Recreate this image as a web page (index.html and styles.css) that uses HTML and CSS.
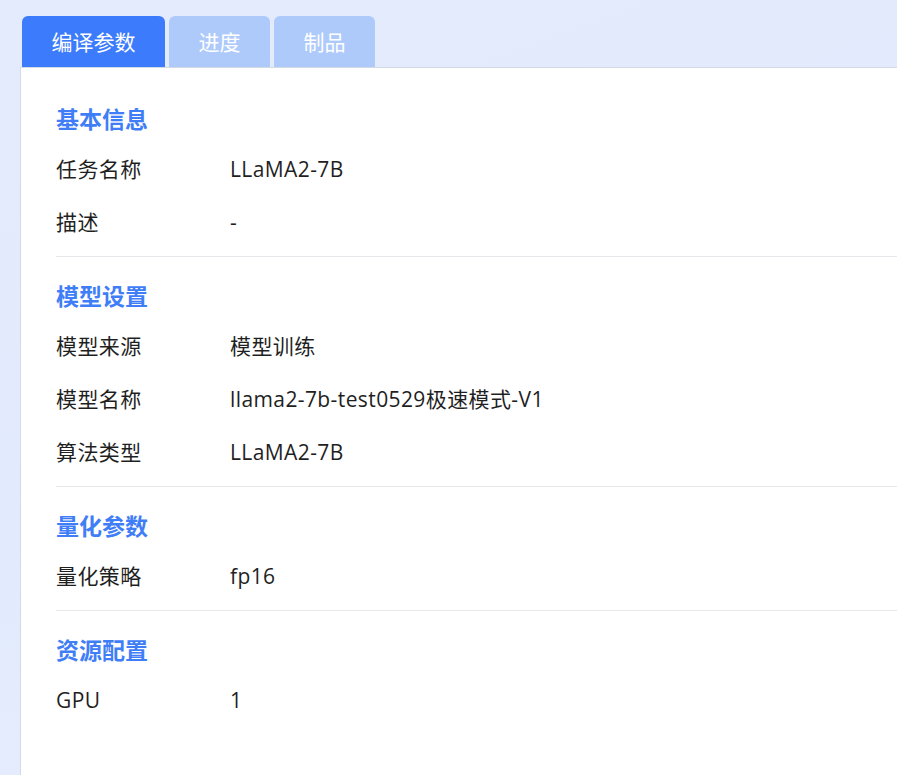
FILE: index.html
```html
<!DOCTYPE html>
<html lang="zh-CN">
<head>
<meta charset="utf-8">
<title>编译参数</title>
<link rel="stylesheet" href="styles.css">
</head>
<body>
<div class="page">
  <div class="tabs">
    <div class="tab active">编译参数</div>
    <div class="tab">进度</div>
    <div class="tab">制品</div>
  </div>
  <div class="panel">
    <section class="section">
      <h2 class="title">基本信息</h2>
      <div class="row"><span class="label">任务名称</span><span class="value">LLaMA2-7B</span></div>
      <div class="row"><span class="label">描述</span><span class="value">-</span></div>
    </section>
    <section class="section">
      <h2 class="title">模型设置</h2>
      <div class="row"><span class="label">模型来源</span><span class="value">模型训练</span></div>
      <div class="row"><span class="label">模型名称</span><span class="value">llama2-7b-test0529极速模式-V1</span></div>
      <div class="row"><span class="label">算法类型</span><span class="value">LLaMA2-7B</span></div>
    </section>
    <section class="section">
      <h2 class="title">量化参数</h2>
      <div class="row"><span class="label">量化策略</span><span class="value">fp16</span></div>
    </section>
    <section class="section last">
      <h2 class="title">资源配置</h2>
      <div class="row"><span class="label">GPU</span><span class="value">1</span></div>
    </section>
  </div>
</div>
</body>
</html>
```
FILE: styles.css
```css
html, body {
  margin: 0;
  padding: 0;
  height: 100%;
}
body {
  background: linear-gradient(160deg, #e4ebfc 0%, #e2eafd 50%, #e6eefd 100%);
  font-family: "Open Sans", "Noto Sans CJK SC", sans-serif;
  color: #1f1f1f;
  overflow: hidden;
}
.page {
  padding: 16px 0 0 20px;
  display: flex;
  flex-direction: column;
  height: calc(100% - 16px);
}
.tabs {
  display: flex;
  gap: 4px;
  margin-left: 2px;
}
.tab {
  height: 51px;
  line-height: 51px;
  padding: 0 29.5px;
  text-align: center;
  font-size: 21px;
  color: #ffffff;
  background: #aecafb;
  border-radius: 6px 6px 0 0;
  font-family: "Noto Sans CJK SC", sans-serif;
}
.tab.active {
  background: #3c7bfc;
}
.panel {
  flex: 1;
  background: #ffffff;
  border-left: 1px solid #d3d9e5;
  border-top: 1px solid #d3d9e5;
  padding: 35px 0 0 35px;
}
.section {
  border-bottom: 1px solid #e6e8ec;
  padding-bottom: 7px;
  margin-bottom: 23px;
}
.section.last {
  border-bottom: none;
}
.title {
  margin: 0 0 10px 0;
  height: 30px;
  line-height: 30px;
  font-size: 23px;
  font-weight: 700;
  color: #3f7ef6;
  font-family: "Noto Sans CJK SC", sans-serif;
}
.row {
  display: flex;
  height: 53px;
  line-height: 53px;
  font-size: 21px;
}
.label {
  width: 174px;
  flex: none;
  letter-spacing: 0.4px;
}
.value {
  flex: 1;
  letter-spacing: 0.4px;
}
```
